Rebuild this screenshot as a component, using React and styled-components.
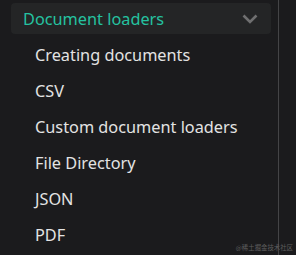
import React from "react";
import styled, { createGlobalStyle } from "styled-components";

const GlobalStyle = createGlobalStyle`
  html, body {
    margin: 0;
    padding: 0;
    background: #1b1b1d;
  }
`;

const Page = styled.div`
  width: 296px;
  height: 255px;
  display: flex;
  background: #1b1b1d;
  font-family: "Noto Sans", "Open Sans", sans-serif;
  overflow: hidden;
  position: relative;
`;

const Sidebar = styled.nav`
  width: 279px;
  padding: 3px 7px 0 11px;
  box-sizing: border-box;
  border-right: 1px solid #444446;
  display: flex;
  flex-direction: column;
`;

const CategoryRow = styled.div`
  height: 31px;
  display: flex;
  align-items: center;
  justify-content: space-between;
  padding: 0 13px 0 12px;
  border-radius: 4px;
  background: #242526;
`;

const CategoryLabel = styled.span`
  font-size: 16.3px;
  color: #25c2a0;
`;

const List = styled.ul`
  list-style: none;
  margin: 0;
  padding: 3px 0 0 24px;
  display: flex;
  flex-direction: column;
`;

const Item = styled.li`
  height: 36px;
  display: flex;
  align-items: center;
  font-size: 16.3px;
  color: #e3e3e3;
`;

const Watermark = styled.div`
  position: absolute;
  right: 3px;
  bottom: 3px;
  font-family: "Noto Sans CJK SC", sans-serif;
  font-size: 6.4px;
  color: #5e5e5e;
`;

const Chevron = () => (
  <svg width="16" height="10" viewBox="0 0 16 10" fill="none">
    <path d="M1.5 1.5 L8 8 L14.5 1.5" stroke="#6f6f70" strokeWidth="2.6" />
  </svg>
);

const items = [
  "Creating documents",
  "CSV",
  "Custom document loaders",
  "File Directory",
  "JSON",
  "PDF",
];

export default function App() {
  return (
    <Page>
      <GlobalStyle />
      <Sidebar>
        <CategoryRow>
          <CategoryLabel>Document loaders</CategoryLabel>
          <Chevron />
        </CategoryRow>
        <List>
          {items.map((t) => (
            <Item key={t}>{t}</Item>
          ))}
        </List>
      </Sidebar>
      <Watermark>@稀土掘金技术社区</Watermark>
    </Page>
  );
}
